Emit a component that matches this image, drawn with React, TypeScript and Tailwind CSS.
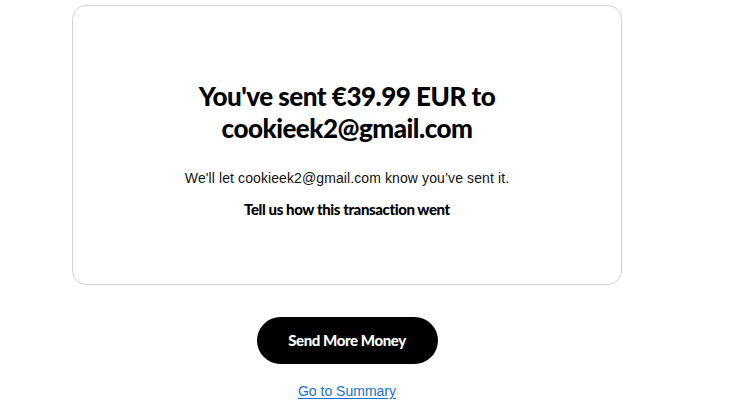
import React from "react";

export default function App() {
  return (
    <div className="min-h-[415px] w-[731px] bg-white pt-[5px]">
      <div className="ml-[72px] flex w-[550px] flex-col items-center">
        <div className="flex h-[280px] w-full flex-col items-center rounded-[14px] border border-[#d2d2d2] pt-[74px]">
          <h1 className="w-[330px] text-center font-['Lato',_'Noto_Sans',_sans-serif] text-[26px] font-black leading-[32px] tracking-[-0.5px] text-black">
            You've sent €39.99 EUR to cookieek2@gmail.com
          </h1>
          <p className="mt-[24px] font-['Liberation_Sans',_Arial,_sans-serif] text-[14px] leading-[20px] tracking-[0.1px] text-[#111]">
            We'll let cookieek2@gmail.com know you’ve sent it.
          </p>
          <p className="mt-[11px] font-['Lato',_'Noto_Sans',_sans-serif] text-[15px] font-black leading-[20px] tracking-[-0.4px] text-black">
            Tell us how this transaction went
          </p>
        </div>
        <button className="mt-[32px] flex h-[47px] w-[181px] items-center justify-center rounded-full bg-black font-['Lato',_'Noto_Sans',_sans-serif] text-[15px] font-black tracking-[-0.4px] text-white">
          Send More Money
        </button>
        <a
          href="#"
          className="mt-[17px] font-['Liberation_Sans',_Arial,_sans-serif] text-[14px] leading-[20px] text-[#1a6fd6] underline underline-offset-2"
        >
          Go to Summary
        </a>
      </div>
    </div>
  );
}
